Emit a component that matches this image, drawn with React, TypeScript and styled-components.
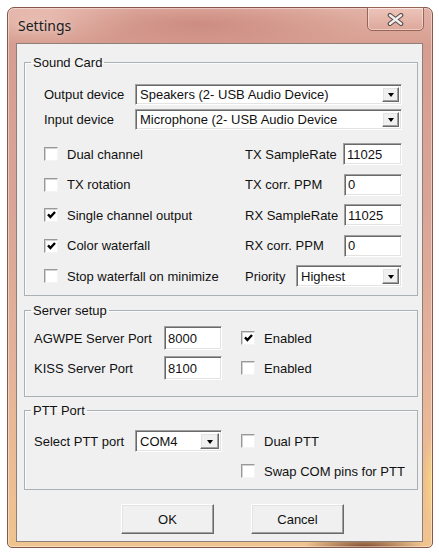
import React from "react";
import styled, { createGlobalStyle } from "styled-components";

const GlobalStyle = createGlobalStyle`
  html, body { margin: 0; padding: 0; background: #ffffff; }
  body {
    font-family: "Liberation Sans", Arial, sans-serif;
    font-size: 13px;
    color: #111;
  }
  * { box-sizing: border-box; }
`;

const Window = styled.div`
  width: 426px;
  height: 541px;
  margin: 7px 0 0 7px;
  border: 1px solid #86584c;
  border-radius: 7px 7px 5px 5px;
  box-shadow: inset 0 0 0 1px rgba(255, 255, 255, 0.4);
  background:
    radial-gradient(ellipse 60px 14px at 84% 100%, rgba(90, 40, 20, 0.75), transparent),
    radial-gradient(ellipse 8px 50px at 100% 88%, rgba(250, 215, 120, 0.9), transparent),
    radial-gradient(ellipse 170px 30px at 45% 3%, rgba(195, 120, 110, 0.6), transparent),
    radial-gradient(ellipse 90px 25px at 10% 2%, rgba(240, 200, 190, 0.6), transparent),
    linear-gradient(to bottom, #e2b2a6 0%, #d69e90 7%, #d9a496 35%, #e4b29a 65%, #eebf93 90%, #f0c48e 100%);
  display: flex;
  flex-direction: column;
  padding: 0 9px 5px 8px;
`;

const TitleBar = styled.div`
  height: 35px;
  display: flex;
  align-items: flex-start;
  justify-content: space-between;
`;

const Title = styled.div`
  margin-left: 2px;
  line-height: 35px;
  font-family: "Noto Sans", "Open Sans", sans-serif;
  font-size: 14px;
  color: #1b1b1b;
  text-shadow: 0 0 6px rgba(255, 255, 255, 0.55);
`;

const CloseButton = styled.div`
  width: 57px;
  height: 24px;
  margin: -1px -1px 0 0;
  border: 1px solid #996557;
  border-radius: 0 0 5px 5px;
  background: linear-gradient(to bottom, rgba(255, 230, 222, 0.35), rgba(230, 170, 155, 0.2));
  box-shadow: inset 0 0 0 1px rgba(255, 255, 255, 0.4);
  display: flex;
  align-items: center;
  justify-content: center;
`;

const Client = styled.div`
  flex: 1;
  background: #f0f0f0;
  border: 1px solid #8f7f7a;
  display: flex;
  flex-direction: column;
  padding: 0 4px 0 7px;
`;

const Group = styled.fieldset<{ $top: number; $pad: string }>`
  margin: ${(p) => p.$top}px 0 0 0;
  padding: ${(p) => p.$pad};
  border: 1px solid #aab1b5;
  box-shadow: inset 1px 1px 0 #fbfbfb;
  min-width: 0;
`;

const Legend = styled.legend<{ $shift: number }>`
  margin-left: ${(p) => p.$shift}px;
  padding: 0 2px;
  line-height: 15px;
  font-size: 13px;
  color: #111;
`;

const DeviceGrid = styled.div`
  display: grid;
  grid-template-columns: 91px 1fr;
  row-gap: 4px;
  align-items: center;
`;

const Label = styled.span`
  white-space: nowrap;
`;

const OptionsGrid = styled.div`
  margin-top: 13px;
  display: grid;
  grid-template-columns: 201px 1fr;
  grid-auto-rows: 22px;
  row-gap: 8.5px;
  align-items: center;
`;

const FieldPair = styled.div`
  display: flex;
  align-items: center;
  justify-content: space-between;
  height: 100%;
`;

const sunken = `
  border: 1px solid;
  border-color: #a0a0a0 #ffffff #ffffff #a0a0a0;
  box-shadow: inset 1px 1px 0 #696969, inset -1px -1px 0 #e3e3e3;
`;

const raised = `
  border: 1px solid;
  border-color: #ffffff #696969 #696969 #ffffff;
  box-shadow: inset -1px -1px 0 #a0a0a0, inset 1px 1px 0 #e3e3e3;
`;

const TextField = styled.div<{ $w: number; $h: number }>`
  ${sunken}
  width: ${(p) => p.$w}px;
  height: ${(p) => p.$h}px;
  background: #fff;
  padding-left: 3px;
  display: flex;
  align-items: center;
  color: #111;
`;

const Combo = styled.div<{ $w?: number; $h: number }>`
  ${sunken}
  width: ${(p) => (p.$w ? `${p.$w}px` : "100%")};
  height: ${(p) => p.$h}px;
  background: #fff;
  display: flex;
  align-items: stretch;
  padding: 2px;
`;

const ComboText = styled.div`
  flex: 1;
  padding-left: 2px;
  display: flex;
  align-items: center;
  white-space: nowrap;
  overflow: hidden;
  color: #111;
`;

const DropButton = styled.div<{ $w: number }>`
  ${raised}
  width: ${(p) => p.$w}px;
  background: #f0f0f0;
  display: flex;
  align-items: center;
  justify-content: center;
`;

const Arrow = styled.span`
  width: 0;
  height: 0;
  border-left: 3.5px solid transparent;
  border-right: 3.5px solid transparent;
  border-top: 4px solid #000;
  margin-top: 1px;
`;

const CheckRow = styled.label`
  display: flex;
  align-items: center;
  gap: 9px;
  white-space: nowrap;
  height: 100%;
`;

const Box = styled.span`
  width: 14px;
  height: 14px;
  background: #fff;
  border: 1px solid;
  border-color: #999999 #f4f4f4 #f4f4f4 #999999;
  box-shadow: inset 1px 1px 0 #d2d2d2;
  display: flex;
  align-items: center;
  justify-content: center;
  flex: none;
`;

const PortGrid = styled.div<{ $label: number; $field: number }>`
  display: grid;
  grid-template-columns: ${(p) => p.$label}px ${(p) => p.$field}px auto;
  grid-auto-rows: 24px;
  row-gap: 6px;
  align-items: center;
`;

const CheckCell = styled.div<{ $col?: number }>`
  margin-left: 19px;
  height: 100%;
  grid-column: ${(p) => p.$col ?? "auto"};
`;

const ButtonRow = styled.div`
  margin-top: 14px;
  padding-left: 97px;
  display: flex;
  gap: 37px;
`;

const Button = styled.div`
  ${raised}
  width: 93px;
  height: 30px;
  background: #f0f0f0;
  display: flex;
  align-items: center;
  justify-content: center;
  color: #111;
`;

const Check = ({ checked, label }: { checked?: boolean; label: string }) => (
  <CheckRow>
    <Box>
      {checked && (
        <svg width="9" height="8" viewBox="0 0 9 8">
          <polyline points="1,3.4 3.4,6 8,1" fill="none" stroke="#000" strokeWidth="2.4" />
        </svg>
      )}
    </Box>
    {label}
  </CheckRow>
);

const ComboBox = ({ value, w, h, btn = 17 }: { value: string; w?: number; h: number; btn?: number }) => (
  <Combo $w={w} $h={h}>
    <ComboText>{value}</ComboText>
    <DropButton $w={btn}>
      <Arrow />
    </DropButton>
  </Combo>
);

export default function App() {
  return (
    <>
      <GlobalStyle />
      <Window>
        <TitleBar>
          <Title>Settings</Title>
          <CloseButton>
            <svg width="17" height="13" viewBox="0 0 17 13">
              <path d="M3 2.2 L14 10.8 M14 2.2 L3 10.8" stroke="#5d4c49" strokeWidth="4.6" strokeLinecap="round" />
              <path d="M3 2.2 L14 10.8 M14 2.2 L3 10.8" stroke="#efefef" strokeWidth="2.4" strokeLinecap="round" />
            </svg>
          </CloseButton>
        </TitleBar>
        <Client>
          <Group $top={11} $pad="14px 15px 8px 19px">
            <Legend $shift={-13}>Sound Card</Legend>
            <DeviceGrid>
              <Label>Output device</Label>
              <ComboBox value="Speakers (2- USB Audio Device)" h={21} />
              <Label>Input device</Label>
              <ComboBox value="Microphone (2- USB Audio Device" h={21} />
            </DeviceGrid>
            <OptionsGrid>
              <Check label="Dual channel" />
              <FieldPair>
                <Label>TX SampleRate</Label>
                <TextField $w={59} $h={22}>11025</TextField>
              </FieldPair>
              <Check label="TX rotation" />
              <FieldPair>
                <Label>TX corr. PPM</Label>
                <TextField $w={58} $h={22}>0</TextField>
              </FieldPair>
              <Check checked label="Single channel output" />
              <FieldPair>
                <Label>RX SampleRate</Label>
                <TextField $w={58} $h={22}>11025</TextField>
              </FieldPair>
              <Check checked label="Color waterfall" />
              <FieldPair>
                <Label>RX corr. PPM</Label>
                <TextField $w={58} $h={22}>0</TextField>
              </FieldPair>
              <Check label="Stop waterfall on minimize" />
              <FieldPair>
                <Label>Priority</Label>
                <ComboBox value="Highest" w={106} h={22} />
              </FieldPair>
            </OptionsGrid>
          </Group>

          <Group $top={7} $pad="8px 15px 16px 9px">
            <Legend $shift={-3}>Server setup</Legend>
            <PortGrid $label={130} $field={58}>
              <Label>AGWPE Server Port</Label>
              <TextField $w={58} $h={24}>8000</TextField>
              <CheckCell>
                <Check checked label="Enabled" />
              </CheckCell>
              <Label>KISS Server Port</Label>
              <TextField $w={58} $h={24}>8100</TextField>
              <CheckCell>
                <Check label="Enabled" />
              </CheckCell>
            </PortGrid>
          </Group>

          <Group $top={6} $pad="11px 15px 6px 9px">
            <Legend $shift={-3}>PTT Port</Legend>
            <PortGrid $label={101} $field={87}>
              <Label>Select PTT port</Label>
              <ComboBox value="COM4" w={87} h={22} btn={19} />
              <CheckCell>
                <Check label="Dual PTT" />
              </CheckCell>
              <CheckCell $col={3}>
                <Check label="Swap COM pins for PTT" />
              </CheckCell>
            </PortGrid>
          </Group>

          <ButtonRow>
            <Button>OK</Button>
            <Button>Cancel</Button>
          </ButtonRow>
        </Client>
      </Window>
    </>
  );
}
